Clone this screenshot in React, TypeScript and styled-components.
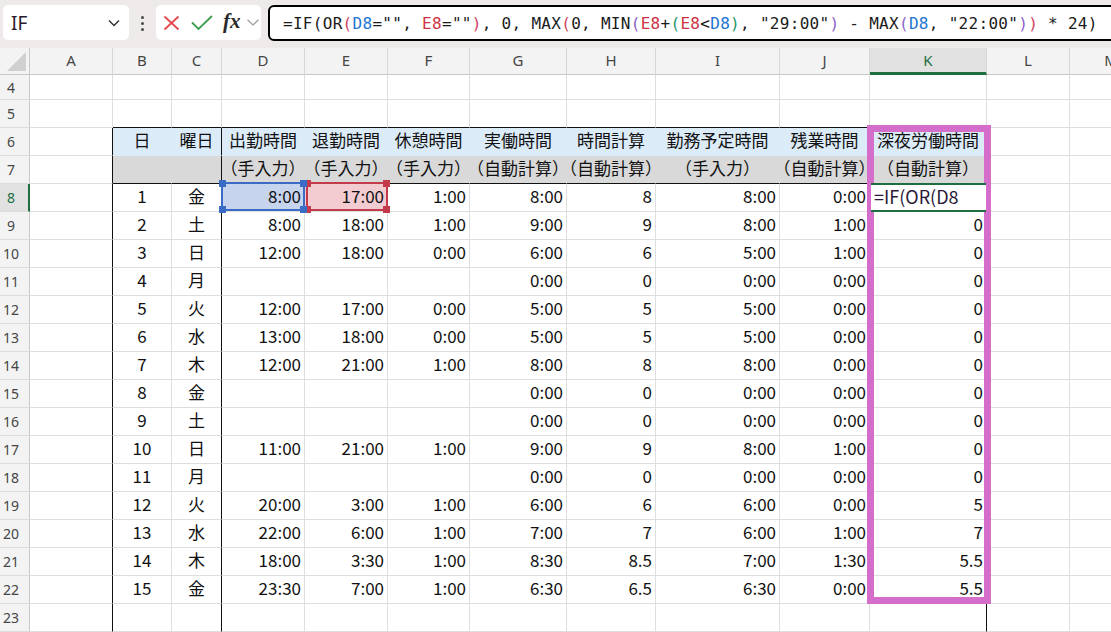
import React from "react";
import styled, { createGlobalStyle } from "styled-components";

const GlobalStyle = createGlobalStyle`
  html, body { margin: 0; padding: 0; background: #ffffff; }
  body { overflow: hidden; font-family: "Noto Sans CJK JP", "Noto Sans", sans-serif; }
  #root { width: 1111px; height: 632px; overflow: hidden; }
`;

const INK = "#1b1b1b";
const REF_BLUE = "#2174d0";
const REF_RED = "#cc3344";
const P2 = "#cf3f62";
const P3 = "#8c62c9";
const P4 = "#26966c";

const GRID = "#dedede";
const BLACK = "#111111";
const HEAD_BLUE = "#dcebf8";
const HEAD_GREY = "#d9d9d9";
const SEL_GREEN = "#1e6e42";
const PINK = "#d56ecb";

const Page = styled.div`
  width: 1111px;
  height: 632px;
  overflow: hidden;
  display: flex;
  flex-direction: column;
  background: #ffffff;
`;

const Toolbar = styled.div`
  flex: none;
  height: 48px;
  box-sizing: border-box;
  padding: 5px 0 0 3px;
  display: flex;
  align-items: flex-start;
  background: #eeeaea;
`;

const NameBox = styled.div`
  width: 126px;
  height: 35px;
  box-sizing: border-box;
  background: #ffffff;
  border-radius: 5px;
  display: flex;
  align-items: center;
  justify-content: space-between;
  padding: 0 9px 0 8px;
  font-family: "Noto Sans", sans-serif;
  font-size: 19px;
  color: #2a1a2a;
`;

const DotColumn = styled.div`
  width: 27px;
  height: 35px;
  display: flex;
  flex-direction: column;
  align-items: center;
  justify-content: center;
  gap: 3px;
  padding-top: 2px;
  box-sizing: border-box;
`;

const Dot = styled.span`
  width: 3px;
  height: 3px;
  border-radius: 50%;
  background: #4a4a4a;
`;

const ButtonGroup = styled.div`
  width: 105px;
  height: 35px;
  box-sizing: border-box;
  background: #ffffff;
  border-radius: 5px;
  display: flex;
  align-items: center;
  padding-left: 7px;
`;

const FxLabel = styled.span`
  font-family: "Liberation Serif", serif;
  font-style: italic;
  font-weight: bold;
  font-size: 21px;
  color: #2a2a2a;
  margin: 0 6px 0 10px;
  line-height: 1;
  padding-bottom: 3px;
`;

const FormulaBox = styled.div`
  flex: 1;
  margin: 0 -40px 0 7px;
  height: 36px;
  box-sizing: border-box;
  border: 2px solid #000000;
  border-radius: 6px;
  background: #ffffff;
  display: flex;
  align-items: center;
  padding: 1px 0 0 13px;
  font-family: "DejaVu Sans Mono", "Liberation Mono", monospace;
  font-size: 16px;
  letter-spacing: 0.3px;
  white-space: pre;
`;

const Token = styled.span<{ $color: string }>`
  color: ${(p) => p.$color};
`;

const COLUMN_WIDTHS = [30, 83, 59, 50, 83, 83, 82, 97, 89, 124, 90, 117, 83, 83];
const LETTERS = ["A", "B", "C", "D", "E", "F", "G", "H", "I", "J", "K", "L", "M"];

const Sheet = styled.div`
  position: relative;
  display: grid;
  grid-template-columns: ${COLUMN_WIDTHS.map((w) => `${w}px`).join(" ")};
  grid-template-rows: 27px 25px repeat(19, 28px);
`;

const Corner = styled.div`
  box-sizing: border-box;
  background: #f3f3f3;
  border-right: 1px solid #c8c8c8;
  border-bottom: 1px solid #c8c8c8;
  display: flex;
  align-items: flex-end;
  justify-content: flex-end;
  padding: 0 3px 3px 0;
`;

const ColumnHeader = styled.div<{ $selected: boolean }>`
  box-sizing: border-box;
  background: ${(p) => (p.$selected ? "#e1e1e1" : "#f3f3f3")};
  border-right: 1px solid #d6d6d6;
  border-bottom: ${(p) => (p.$selected ? `3px solid ${SEL_GREEN}` : "1px solid #c8c8c8")};
  display: flex;
  align-items: center;
  justify-content: center;
  padding-bottom: ${(p) => (p.$selected ? "1px" : "3px")};
  font-family: "Noto Sans", sans-serif;
  font-size: 15px;
  color: ${(p) => (p.$selected ? SEL_GREEN : "#454545")};
`;

const RowHeader = styled.div<{ $selected: boolean }>`
  box-sizing: border-box;
  background: ${(p) => (p.$selected ? "#e1e1e1" : "#f3f3f3")};
  border-right: ${(p) => (p.$selected ? `2px solid ${SEL_GREEN}` : "1px solid #c8c8c8")};
  border-bottom: 1px solid #dcdcdc;
  display: flex;
  align-items: center;
  justify-content: center;
  padding-right: ${(p) => (p.$selected ? "6px" : "7px")};
  font-family: "Noto Sans", sans-serif;
  font-size: 14px;
  color: ${(p) => (p.$selected ? SEL_GREEN : "#454545")};
`;

type Align = "left" | "center" | "right";

const Cell = styled.div<{ $fill: string; $right: string; $bottom: string; $align: Align }>`
  position: relative;
  box-sizing: border-box;
  min-width: 0;
  background: ${(p) => p.$fill};
  border-right: 1px solid ${(p) => p.$right};
  border-bottom: 1px solid ${(p) => p.$bottom};
  display: flex;
  align-items: center;
  justify-content: ${(p) => (p.$align === "right" ? "flex-end" : p.$align === "center" ? "center" : "flex-start")};
  padding: 0 3px 4px 3px;
  font-family: "Noto Sans CJK JP", sans-serif;
  font-size: 17px;
  color: #111111;
  white-space: nowrap;
`;

const RefFrame = styled.div<{ $color: string; $layer: number; $shiftLeft: number }>`
  position: absolute;
  top: -2px;
  bottom: 0;
  left: ${(p) => p.$shiftLeft}px;
  right: -1px;
  border: 2px solid ${(p) => p.$color};
  z-index: ${(p) => p.$layer};
  pointer-events: none;
`;

const Handle = styled.span<{ $color: string; $v: "top" | "bottom"; $h: "left" | "right" }>`
  position: absolute;
  width: 7px;
  height: 7px;
  background: ${(p) => p.$color};
  ${(p) => p.$v}: -4px;
  ${(p) => p.$h}: -4px;
`;

const EditBox = styled.div`
  position: absolute;
  top: -1px;
  bottom: -1px;
  left: 1px;
  right: 0;
  z-index: 5;
  box-sizing: border-box;
  background: #ffffff;
  border-top: 2px solid ${SEL_GREEN};
  border-bottom: 2px solid ${SEL_GREEN};
  display: flex;
  align-items: center;
  padding: 0 0 3px 3px;
  font-family: "Noto Sans CJK JP", sans-serif;
  font-size: 18px;
  color: #2b1838;
`;

const PinkFrame = styled.div`
  position: absolute;
  grid-column: 12 / 13;
  grid-row: 4 / 21;
  top: -3px;
  left: -3px;
  right: -4px;
  bottom: 0;
  border: 7px solid ${PINK};
  z-index: 3;
  pointer-events: none;
`;

const FORMULA: Array<[string, string]> = [
  ["=IF(OR", INK],
  ["(", P2],
  ["D8", REF_BLUE],
  ['="", ', INK],
  ["E8", REF_RED],
  ['=""', INK],
  [")", P2],
  [", 0, MAX", INK],
  ["(", P2],
  ["0, MIN", INK],
  ["(", P3],
  ["E8", REF_RED],
  ["+", INK],
  ["(", P4],
  ["E8", REF_RED],
  ["<", INK],
  ["D8", REF_BLUE],
  [")", P4],
  [', "29:00"', INK],
  [")", P3],
  [" - MAX", INK],
  ["(", P3],
  ["D8", REF_BLUE],
  [', "22:00"', INK],
  [")", P3],
  [")", P2],
  [" * 24)", INK],
];

const HEAD6 = ["日", "曜日", "出勤時間", "退勤時間", "休憩時間", "実働時間", "時間計算", "勤務予定時間", "残業時間", "深夜労働時間"];
const HEAD7 = ["", "", "（手入力）", "（手入力）", "（手入力）", "（自動計算）", "（自動計算）", "（手入力）", "（自動計算）", "（自動計算）"];

const DATA: string[][] = [
  ["1", "金", "8:00", "17:00", "1:00", "8:00", "8", "8:00", "0:00", ""],
  ["2", "土", "8:00", "18:00", "1:00", "9:00", "9", "8:00", "1:00", "0"],
  ["3", "日", "12:00", "18:00", "0:00", "6:00", "6", "5:00", "1:00", "0"],
  ["4", "月", "", "", "", "0:00", "0", "0:00", "0:00", "0"],
  ["5", "火", "12:00", "17:00", "0:00", "5:00", "5", "5:00", "0:00", "0"],
  ["6", "水", "13:00", "18:00", "0:00", "5:00", "5", "5:00", "0:00", "0"],
  ["7", "木", "12:00", "21:00", "1:00", "8:00", "8", "8:00", "0:00", "0"],
  ["8", "金", "", "", "", "0:00", "0", "0:00", "0:00", "0"],
  ["9", "土", "", "", "", "0:00", "0", "0:00", "0:00", "0"],
  ["10", "日", "11:00", "21:00", "1:00", "9:00", "9", "8:00", "1:00", "0"],
  ["11", "月", "", "", "", "0:00", "0", "0:00", "0:00", "0"],
  ["12", "火", "20:00", "3:00", "1:00", "6:00", "6", "6:00", "0:00", "5"],
  ["13", "水", "22:00", "6:00", "1:00", "7:00", "7", "6:00", "1:00", "7"],
  ["14", "木", "18:00", "3:30", "1:00", "8:30", "8.5", "7:00", "1:30", "5.5"],
  ["15", "金", "23:30", "7:00", "1:00", "6:30", "6.5", "6:30", "0:00", "5.5"],
];

const ROWS = Array.from({ length: 20 }, (_, i) => i + 4);

// column index: 0=A, 1=B ... 10=K, 11=L, 12=M
function cellValue(r: number, c: number): string {
  if (c < 1 || c > 10) return "";
  if (r === 6) return HEAD6[c - 1];
  if (r === 7) return HEAD7[c - 1];
  if (r >= 8 && r <= 22) return DATA[r - 8][c - 1];
  return "";
}

function cellFill(r: number, c: number): string {
  if (c >= 1 && c <= 10) {
    if (r === 6) return HEAD_BLUE;
    if (r === 7) return HEAD_GREY;
  }
  if (r === 8 && c === 3) return "#c6d4ee";
  if (r === 8 && c === 4) return "#f2ccd1";
  return "#ffffff";
}

function rightBorder(r: number, c: number): string {
  if (r >= 6 && (c === 0 || c === 2 || c === 10)) return BLACK;
  if (c >= 1 && c <= 9 && (r === 6 || r === 7)) return cellFill(r, c);
  return GRID;
}

function bottomBorder(r: number, c: number): string {
  if (c >= 1 && c <= 10 && (r === 5 || r === 7)) return BLACK;
  if (c >= 1 && c <= 10 && r === 6) return HEAD_BLUE;
  return GRID;
}

function cellAlign(r: number, c: number): Align {
  if (r === 6 || r === 7) return "center";
  if (c === 1 || c === 2) return "center";
  return "right";
}

const Handles: React.FC<{ color: string }> = ({ color }) => (
  <>
    <Handle $color={color} $v="top" $h="left" />
    <Handle $color={color} $v="top" $h="right" />
    <Handle $color={color} $v="bottom" $h="left" />
    <Handle $color={color} $v="bottom" $h="right" />
  </>
);

function cellExtras(r: number, c: number): React.ReactNode {
  if (r !== 8) return null;
  if (c === 3)
    return (
      <RefFrame $color="#3a6cc6" $layer={2} $shiftLeft={-1}>
        <Handles color="#3a6cc6" />
      </RefFrame>
    );
  if (c === 4)
    return (
      <RefFrame $color="#c33a4b" $layer={1} $shiftLeft={1}>
        <Handles color="#c33a4b" />
      </RefFrame>
    );
  if (c === 10) return <EditBox>=IF(OR(D8</EditBox>;
  return null;
}

export default function App() {
  return (
    <Page>
      <GlobalStyle />
      <Toolbar>
        <NameBox>
          <span>IF</span>
          <svg width="12" height="8" viewBox="0 0 12 8">
            <polyline points="1,1.5 6,6.5 11,1.5" fill="none" stroke="#333" strokeWidth="1.5" />
          </svg>
        </NameBox>
        <DotColumn>
          <Dot />
          <Dot />
          <Dot />
        </DotColumn>
        <ButtonGroup>
          <svg width="17" height="16" viewBox="0 0 17 16">
            <line x1="1.5" y1="1.5" x2="15.5" y2="14.5" stroke="#e5484d" strokeWidth="1.8" />
            <line x1="15.5" y1="1.5" x2="1.5" y2="14.5" stroke="#e5484d" strokeWidth="1.8" />
          </svg>
          <svg width="22" height="16" viewBox="0 0 22 16" style={{ marginLeft: 11 }}>
            <polyline points="1,7.5 7.5,14 21,1" fill="none" stroke="#3d9f4e" strokeWidth="1.8" />
          </svg>
          <FxLabel>fx</FxLabel>
          <svg width="12" height="7" viewBox="0 0 12 7">
            <polyline points="0.5,0.8 6,6 11.5,0.8" fill="none" stroke="#9a9a9a" strokeWidth="1.2" />
          </svg>
        </ButtonGroup>
        <FormulaBox>
          {FORMULA.map(([text, color], i) => (
            <Token key={i} $color={color}>
              {text}
            </Token>
          ))}
        </FormulaBox>
      </Toolbar>
      <Sheet>
        <Corner>
          <svg width="19" height="19" viewBox="0 0 19 19">
            <polygon points="19,0 19,19 0,19" fill="#d0d0d0" />
          </svg>
        </Corner>
        {LETTERS.map((l) => (
          <ColumnHeader key={l} $selected={l === "K"}>
            {l}
          </ColumnHeader>
        ))}
        {ROWS.map((r) => (
          <React.Fragment key={r}>
            <RowHeader $selected={r === 8}>{r}</RowHeader>
            {LETTERS.map((l, c) => (
              <Cell
                key={l}
                $fill={cellFill(r, c)}
                $right={rightBorder(r, c)}
                $bottom={bottomBorder(r, c)}
                $align={cellAlign(r, c)}
              >
                {cellValue(r, c)}
                {cellExtras(r, c)}
              </Cell>
            ))}
          </React.Fragment>
        ))}
        <PinkFrame />
      </Sheet>
    </Page>
  );
}
